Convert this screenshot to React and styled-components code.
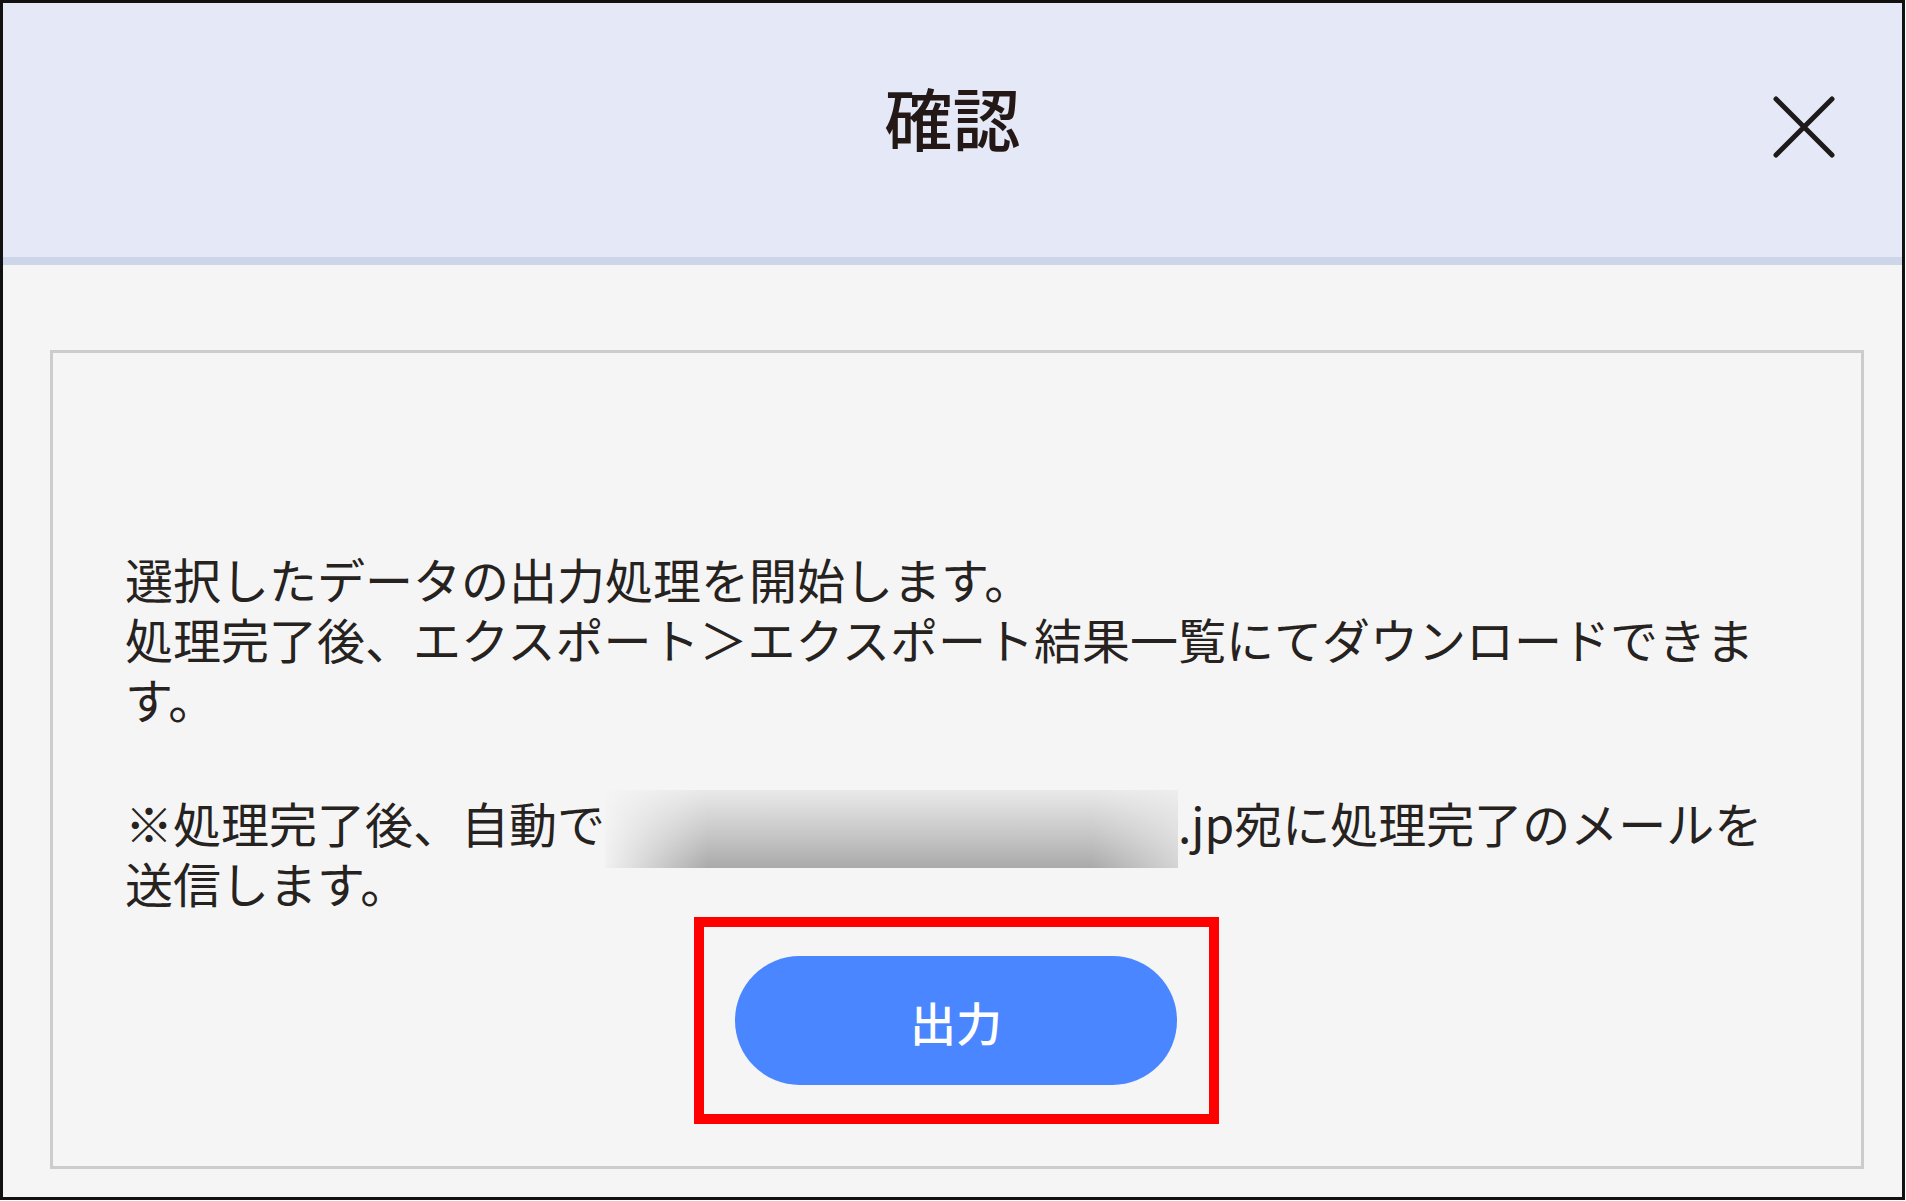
import React from "react";
import styled, { createGlobalStyle } from "styled-components";

const GlobalStyle = createGlobalStyle`
  html, body {
    margin: 0;
    padding: 0;
    background: #ffffff;
  }
  * {
    box-sizing: border-box;
  }
`;

const Frame = styled.div`
  width: 1905px;
  height: 1200px;
  border: 3px solid #111111;
  display: flex;
  flex-direction: column;
  font-family: "Noto Sans CJK JP", "Noto Sans", sans-serif;
  color: #231815;
`;

const Header = styled.div`
  height: 262px;
  flex-shrink: 0;
  background-color: #e5e8f6;
  border-bottom: 8px solid #cdd5e8;
  display: grid;
  grid-template-columns: 1fr auto 1fr;
  align-items: start;
  padding-top: 80px;
`;

const Title = styled.h1`
  grid-column: 2;
  margin: 0;
  font-size: 68px;
  line-height: 68px;
  font-weight: 500;
  letter-spacing: 0;
`;

const CloseButton = styled.button`
  grid-column: 3;
  justify-self: end;
  margin: 12px 66px 0 0;
  padding: 0;
  width: 64px;
  height: 64px;
  border: none;
  background: transparent;
  cursor: pointer;
  color: #1e1a1a;
`;

const Body = styled.div`
  flex: 1;
  background-color: #f5f5f5;
  padding: 85px 38px 28px 47px;
  display: flex;
`;

const InnerBox = styled.div`
  flex: 1;
  border: 3px solid #cccccc;
  padding: 195px 74px 0 72px;
`;

const Message = styled.p`
  margin: 0 0 ${({ $gap }) => $gap || 0}px;
  font-size: 48px;
  line-height: 60px;
  font-weight: 400;
  color: #262220;
`;

// blurred-out e-mail address
const Redacted = styled.span`
  display: inline-block;
  width: 573px;
  height: 78px;
  margin: -2px 0 -16px;
  vertical-align: top;
  background:
    linear-gradient(to right, rgba(245, 245, 245, 0.95) 0%, rgba(245, 245, 245, 0) 18%, rgba(245, 245, 245, 0) 85%, rgba(240, 240, 240, 0.6) 100%),
    linear-gradient(to bottom, #e9e9e9 0%, #c8c8c8 55%, #aaaaaa 100%);
`;

const Highlight = styled.div`
  width: 525px;
  margin: 5px auto 0;
  border: 10px solid #ff0000;
  padding: 29px 31px;
  display: flex;
  justify-content: center;
`;

const OutputButton = styled.button`
  width: 442px;
  height: 129px;
  border: none;
  border-radius: 65px;
  background-color: #4a86ff;
  color: #ffffff;
  font-family: "Noto Sans CJK JP", "Noto Sans", sans-serif;
  font-size: 46px;
  font-weight: 500;
  cursor: pointer;
`;

const CloseIcon = () => (
  <svg width="64" height="64" viewBox="0 0 64 64" fill="none">
    <path
      d="M4 4 L60 60 M60 4 L4 60"
      stroke="currentColor"
      strokeWidth="5"
      strokeLinecap="round"
    />
  </svg>
);

export default function App() {
  return (
    <>
      <GlobalStyle />
      <Frame>
        <Header>
          <Title>確認</Title>
          <CloseButton aria-label="閉じる">
            <CloseIcon />
          </CloseButton>
        </Header>
        <Body>
          <InnerBox>
            <Message $gap={64}>
              選択したデータの出力処理を開始します。
              <br />
              処理完了後、エクスポート＞エクスポート結果一覧にてダウンロードできます。
            </Message>
            <Message>
              ※処理完了後、自動で<Redacted />.jp宛に処理完了のメールを送信します。
            </Message>
            <Highlight>
              <OutputButton>出力</OutputButton>
            </Highlight>
          </InnerBox>
        </Body>
      </Frame>
    </>
  );
}
